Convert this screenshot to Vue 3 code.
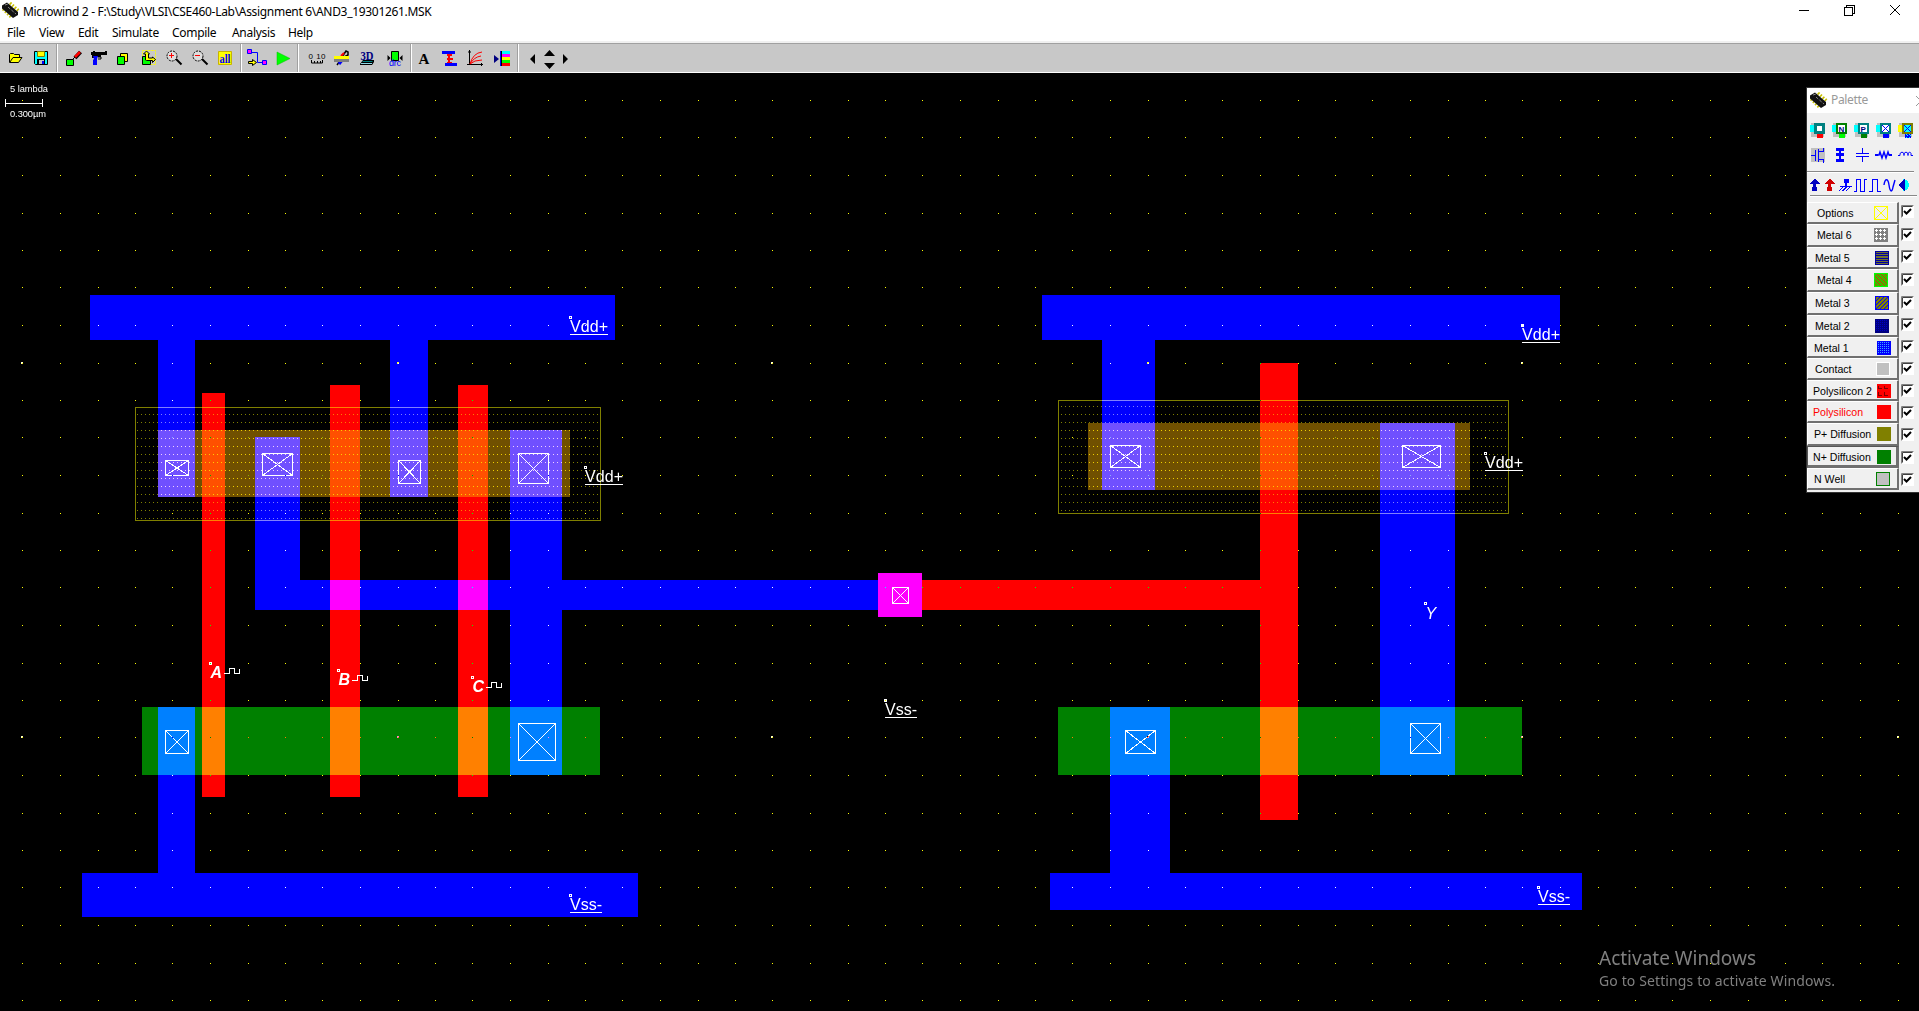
<script setup>
const menus = [
  { name: 'File', w: 32 }, { name: 'View', w: 39 }, { name: 'Edit', w: 34 },
  { name: 'Simulate', w: 60 }, { name: 'Compile', w: 60 }, { name: 'Analysis', w: 56 }, { name: 'Help', w: 40 },
]

// Metal 1 shapes
const metal = [
  'M90 295H615V340H428V497H390V340H195V497H158V340H90Z',
  'M255 437H300V580H510V430H562V580H878V573H922V617H878V610H562V775H510V610H255Z',
  'M158 707H195V873H638V917H82V873H158Z',
  'M1042 295H1560V340H1155V490H1102V340H1042Z',
  'M1380 423H1455V775H1380Z',
  'M1110 707H1170V873H1582V910H1050V873H1110Z',
]
const poly = [
  'M202 393H225V797H202Z', 'M330 385H360V797H330Z', 'M458 385H488V797H458Z',
  'M878 573H922V580H1260V363H1298V820H1260V610H922V617H878Z',
]
const pdiff = ['M158 430H570V497H158Z', 'M1088 423H1470V490H1088Z']
const ndiff = ['M142 707H600V775H142Z', 'M1058 707H1522V775H1058Z']
const wells = [
  { x: 135, y: 407, w: 466, h: 114 },
  { x: 1058, y: 400, w: 451, h: 114 },
]
const contacts = [
  [165, 460, 189, 476], [262, 453, 293, 476], [398, 460, 421, 484], [518, 453, 549, 484],
  [165, 730, 189, 754], [518, 723, 556, 761], [892, 587, 909, 604],
  [1110, 445, 1141, 468], [1402, 445, 1441, 468], [1125, 730, 1156, 754], [1410, 723, 1441, 754],
].map(([a, b, c, d]) => {
  const l = a + 0.5, t = b + 0.5, r = c - 0.5, m = d - 0.5
  return `M${l} ${t}H${r}V${m}H${l}ZL${r} ${m}M${r} ${t}L${l} ${m}`
})
const supplies = [
  { t: 'Vdd+', x: 569, y: 316, w: 38 }, { t: 'Vdd+', x: 584, y: 466, w: 38 },
  { t: 'Vdd+', x: 1521, y: 324, w: 38 }, { t: 'Vdd+', x: 1484, y: 452, w: 38 },
  { t: 'Vss-', x: 884, y: 699, w: 32 }, { t: 'Vss-', x: 569, y: 894, w: 32 },
  { t: 'Vss-', x: 1537, y: 886, w: 32 },
]
const clocks = [{ t: 'A', x: 209, y: 662 }, { t: 'B', x: 337, y: 669 }, { t: 'C', x: 471, y: 676 }]

// Lambda grid: half pixels go to the even column and to the odd row
const even = v => (v % 1 ? (Math.floor(v) % 2 ? Math.ceil(v) : Math.floor(v)) : v)
const odd = v => (v % 1 ? (Math.floor(v) % 2 ? Math.floor(v) : Math.ceil(v)) : v)
let gridPath = ''
for (let i = 0; i < 51; i++)
  for (let j = 0; j < 25; j++)
    gridPath += `M${even(22.5 + 37.5 * i)} ${odd(100 + 37.5 * j)}h1v1h-1z`
let majorPath = ''
for (const x of [21, 397, 771, 1147, 1521, 1897])
  for (const y of [362, 736]) majorPath += `M${x} ${y}h2v1h-1v1h-1z`

const vias = [
  { frame: '#008080', side: '#0ff', foot: '#f00', t: '' },
  { frame: '#008000', side: '#0ff', foot: '#0f0', t: 'N' },
  { frame: '#008080', side: '#0ff', foot: '#008000', t: 'P' },
  { frame: '#008080', side: '#0ff', foot: '#00f', t: 'x' },
  { frame: '#808000', side: '#ff0', foot: 'url(#metal3)', t: 'X' },
]
const layers = [
  { n: 'Options', h: 22, x: 10, s: 67, c: 3 }, { n: 'Metal 6', h: 23, x: 10, s: 67, c: 4 },
  { n: 'Metal 5', h: 22, x: 8, s: 68, c: 3 }, { n: 'Metal 4', h: 23, x: 10, s: 67, c: 4 },
  { n: 'Metal 3', h: 23, x: 8, s: 68, c: 4 }, { n: 'Metal 2', h: 22, x: 8, s: 68, c: 3 },
  { n: 'Metal 1', h: 21, x: 7, s: 70, c: 3 }, { n: 'Contact', h: 22, x: 8, s: 69, c: 4 },
  { n: 'Polysilicon 2', h: 21, x: 6, s: 70, c: 4 }, { n: 'Polysilicon', h: 22, x: 6, s: 70, c: 5, red: true },
  { n: 'P+ Diffusion', h: 23, x: 7, s: 70, c: 5 }, { n: 'N+ Diffusion', h: 22, x: 6, s: 70, c: 5, on: true },
  { n: 'N Well', h: 22, x: 7, s: 69, c: 5 },
]
</script>

<template>
  <div class="window">
    <header class="titlebar">
      <svg class="chip" width="18" height="18" viewBox="0 0 18 18"><g id="chipShape">
        <path d="M1 7l9 9M8 1l9 8" stroke="#c8c000" stroke-width="3" stroke-dasharray="1.6 1.6" fill="none" />
        <path d="M0 3.500L5 .5L16 10V13L11 16L0 6.500Z" fill="#111" /><path d="M3 3l3 -1M6 5l8 7" stroke="#888" stroke-width="1" stroke-dasharray="3 1.500" />
      </g></svg>
      <h1>Microwind 2 - F:\Study\VLSI\CSE460-Lab\Assignment 6\AND3_19301261.MSK</h1>
      <svg class="winbtns" width="130" height="22" viewBox="1789 0 130 22" fill="none" stroke="#000">
        <path d="M1799 10.500h10M1844.500 7.500h8v8h-8zM1846.500 7.500v-2h8v8h-2" shape-rendering="crispEdges" />
        <path d="M1890 5l10 10M1900 5l-10 10" />
      </svg>
    </header>
    <nav class="menu"><span v-for="m in menus" :key="m.name" :style="{ width: m.w + 'px' }">{{ m.name }}</span></nav>

    <div class="toolbar">
      <div class="group">
        <svg width="28" height="28" viewBox="0 44 28 28"><path d="M9.500 62.500V54.500L10.500 53.500H13.500L14.500 54.500H19.500V57.500H22L18.500 62.500Z" fill="#ff0" stroke="#000" /><path d="M10 62l3-4.500h7" fill="none" stroke="#000" /></svg>
        <svg width="28" height="28" viewBox="28 44 28 28"><path d="M34.500 51.500h13v13h-12l-1-1z" fill="#0ff" stroke="#000" /><path d="M37.500 51.500h7v5h-7z" fill="#ff0" stroke="#808000" /><path d="M37 59h8v6h-8z" fill="#000" /><path d="M39 60h5v4h-5z" fill="#c0c0c0" /><path d="M42 61h2v3h-2z" fill="#00f" /></svg>
      </div>
      <div class="group">
        <svg width="27" height="28" viewBox="58 44 27 28"><path d="M66.500 59.500h7v6h-7z" fill="#0f0" stroke="#000" /><path d="M72 60l3-3" stroke="#000" /><path d="M75 58l5.500-6" stroke="#000" stroke-width="4" /><path d="M75 57l5-5" stroke="#f00" stroke-width="2.600" /></svg>
        <svg width="26" height="28" viewBox="85 44 26 28"><path d="M91 52h2v-1h2v1h10v-1h2v4h-6v2h-4v1h-5v-3h-1z" fill="#000" /><path d="M93 56h5l-1 3v6h-4v-5l1-1z" fill="#00f" /><path d="M98 57h3v2h-3" fill="none" stroke="#000" /></svg>
        <svg width="26" height="28" viewBox="111 44 26 28"><path d="M120.500 53.500h7v8h-7z" fill="#ff0" stroke="#000" /><path d="M117.500 56.500h7v8h-7z" fill="#0f0" stroke="#000" /></svg>
        <svg width="25" height="28" viewBox="137 44 25 28"><path d="M142.500 50.500h13v14h-13z" fill="none" stroke="#ff0" stroke-dasharray="2 1" /><path d="M142.500 56.500h5v4h3v4h-8z" fill="#0f0" stroke="#000" /><path d="M145.500 60v-6h-2l3-3 3 3h-1v4h4v-1l3 2.500-3 3v-2h-6z" fill="#ff0" stroke="#000" /></svg>
        <svg width="25" height="28" viewBox="162 44 25 28"><circle cx="172" cy="56" r="5" fill="#ddd" stroke="#000" stroke-dasharray="2 1" /><path d="M169 55.500h5M171.500 53v5" stroke="#f00" /><path d="M176 59l5.500 5.500" stroke="#000" stroke-width="2" /></svg>
        <svg width="26" height="28" viewBox="187 44 26 28"><circle cx="198" cy="56" r="5" fill="#ddd" stroke="#000" stroke-dasharray="2 1" /><path d="M195 55.500h5" stroke="#f00" /><path d="M202 59l5.500 5.500" stroke="#000" stroke-width="2" /></svg>
        <svg width="27" height="28" viewBox="213 44 27 28"><path d="M218.500 51.500h13v13h-13z" fill="#ff0" stroke="#c8b400" /><text x="219.500" y="63" class="serif" font-size="13" font-weight="bold" fill="#00f" textLength="11" lengthAdjust="spacingAndGlyphs">all</text></svg>
      </div>
      <div class="group">
        <svg width="29" height="28" viewBox="242 44 29 28"><path d="M252 52.500h5.500v10h5" fill="none" stroke="#00f" /><path d="M247.500 49.500h4v4h-4zM262.500 60.500h4v4h-4z" fill="#f0f" stroke="#00f" /><path d="M248.500 61.500h4v-2l4 3-4 3v-2h-4z" fill="#ff0" stroke="#000" /></svg>
        <svg width="26" height="28" viewBox="271 44 26 28"><path d="M277 52v13l13-6.500z" fill="#0f0" stroke="#00c000" stroke-width=".5" /></svg>
      </div>
      <div class="group">
        <svg width="30" height="28" viewBox="299 44 30 28"><text x="308.500" y="59" font-size="8" textLength="17">0 10</text><path d="M311.500 60v3h11v-3M314.500 63v-2M317.500 63v-2M320.500 63v-2" fill="none" stroke="#000" /></svg>
        <svg width="26" height="28" viewBox="329 44 26 28"><path d="M341 58l3-4 2-3 2 1v3l-4 2M337 65l5-7" fill="none" stroke="#000" stroke-width="1.500" /><path d="M339 64l4-5" stroke="#00f" stroke-width="3" /><path d="M341 56l3-3" stroke="#f00" stroke-width="2" /><path d="M334 56h15v3h-15z" fill="#ff0" /><path d="M334 59h15v3h-15z" fill="#808080" /></svg>
        <svg width="28" height="28" viewBox="355 44 28 28"><text x="360.500" y="60" class="serif" font-weight="bold" font-size="13" fill="#000080" textLength="13" lengthAdjust="spacingAndGlyphs">3D</text><path d="M360 64l3-4h11v2l-2 3h-12z" fill="#000" /><path d="M363 61h10l-1 1h-10z" fill="#008080" /><path d="M361 63h11v1h-11z" fill="#90d8e8" /></svg>
        <svg width="27" height="28" viewBox="383 44 27 28"><path d="M391.500 51.500h7v9h-7z" fill="#0f0" stroke="#000" /><path d="M387.500 55v6l3-3zM402.500 55v6l-3-3z" fill="#000" /><text x="389" y="66" font-size="9" fill="#00f" textLength="12">drc</text></svg>
      </div>
      <div class="group">
        <svg width="25" height="28" viewBox="412 44 25 28"><text x="418.500" y="64" class="serif" font-weight="bold" font-size="15">A</text></svg>
        <svg width="25" height="28" viewBox="437 44 25 28"><path d="M442 51h13v3h-13zM445 63h12v3h-12z" fill="#00f" /><path d="M447 54h5v2h-2v2h3v2h-3v2h2v1h-5v-1h1v-2h-1v-2h1v-2h-1z" fill="#f00" /></svg>
        <svg width="26" height="28" viewBox="462 44 26 28"><path d="M469.500 50v15M467 64.500h16M468 52h3M481.500 63v3" stroke="#000" /><path d="M470 64q3-11 12-12M470 64q4-7 11-8M470 64q4-4 12-4" fill="none" stroke="#f00" /></svg>
        <svg width="29" height="28" viewBox="488 44 29 28"><path d="M501 51h9v15h-9z" fill="#000" /><path d="M502 51h8v3h-8z" fill="#0ff" /><path d="M502 54h8v3h-8z" fill="#f0f" /><path d="M502 57h8v3h-8z" fill="#ff0" /><path d="M502 60h8v3h-8z" fill="#0f0" /><path d="M502 63h8v3h-8z" fill="#f00" /><path d="M494 55l5 4-5 4z" fill="#000080" /><path d="M500.500 51v15" stroke="#00f" /></svg>
      </div>
      <div class="group">
        <svg width="60" height="28" viewBox="519 44 60 28"><path d="M535 54v10l-5-5zM563 54v10l5-5zM544 56h11l-5.500-6zM544 63h11l-5.500 6z" /></svg>
      </div>
    </div>

    <main class="canvas">
      <svg class="layout" width="1919" height="938" viewBox="0 73 1919 938">
        <defs>
          <pattern id="nwell" x="1" y="6" width="4" height="8" patternUnits="userSpaceOnUse"><rect width="1" height="1" fill="#808000" /></pattern>
        </defs>
        <rect y="73" width="1919" height="938" fill="#000" />
        <g fill="#808080" class="watermark">
          <text x="1599" y="965" font-size="19" textLength="157">Activate Windows</text>
          <text x="1599" y="986" font-size="14" textLength="236">Go to Settings to activate Windows.</text>
        </g>
        <path v-for="d in metal" :key="d" :d="d" class="add" fill="#00f" />
        <path v-for="d in poly" :key="d" :d="d" class="add" fill="#f00" />
        <path v-for="d in pdiff" :key="d" :d="d" class="add" fill="#705000" />
        <path v-for="d in ndiff" :key="d" :d="d" class="add" fill="#008000" />
        <g v-for="w in wells" :key="w.x" class="add">
          <rect :x="w.x + 1" :y="w.y + 1" :width="w.w - 3" :height="w.h - 2" fill="url(#nwell)" />
          <rect :x="w.x + .5" :y="w.y + .5" :width="w.w - 1" :height="w.h - 1" fill="none" stroke="#808000" />
        </g>
        <path v-for="d in contacts" :key="d" :d="d" class="px" fill="none" stroke="#fff" />
        <path :d="gridPath" class="diff" fill="#ff0" />
        <path :d="majorPath" class="diff" fill="#ffc" />

        <g v-for="s in supplies" :key="s.x + s.t + s.y" fill="#fff">
          <rect :x="s.x + .5" :y="s.y + .5" width="2" height="2" fill="none" stroke="#fff" />
          <text :x="s.x + 1" :y="s.y + 16" font-size="16" :textLength="s.w">{{ s.t }}</text>
          <rect :x="s.x + 1" :y="s.y + 18" :width="s.w" height="1" />
        </g>
        <g v-for="c in clocks" :key="c.t" fill="#fff">
          <rect :x="c.x + .5" :y="c.y + .5" width="2" height="2" fill="none" stroke="#fff" />
          <text :x="c.x + 1.5" :y="c.y + 16" font-size="16" font-weight="bold" font-style="italic">{{ c.t }}</text>
          <path :d="`M${c.x + 15} ${c.y + 11.5}h5.500v-5h5v5h5v-5`" fill="none" stroke="#fff" />
        </g>
        <rect x="1424.500" y="602.500" width="2" height="2" fill="none" stroke="#fff" />
        <text x="1425.500" y="619" font-size="16" font-style="italic" fill="#fff">Y</text>

        <g fill="#fff">
          <text x="10" y="92" font-size="9.300" textLength="38">5 lambda</text>
          <text x="10" y="117" font-size="9.300" textLength="36">0.300µm</text>
          <path d="M5.500 99v8M42.500 99v8M5 103.500h38" class="px" stroke="#fff" />
        </g>
      </svg>

      <aside class="palette">
        <div class="ptitle">
          <svg width="18" height="18" viewBox="0 0 18 18"><use href="#chipShape" /></svg>
          <span>Palette</span>
          <svg class="pclose" width="4" height="12" viewBox="0 0 4 12"><path d="M1 1l5 5-5 5" fill="none" stroke="#999" /></svg>
        </div>
        <svg class="ptools" width="112" height="89" viewBox="1807 113 112 89">
          <defs>
            <pattern id="metal3" width="3" height="3" patternUnits="userSpaceOnUse"><rect width="3" height="3" fill="#0ff" /><path d="M0 3L3 0" stroke="#00f" stroke-width="2" /></pattern>
          </defs>
          <g v-for="(v, i) in vias" :key="i" :transform="`translate(${1810 + i * 22} 123)`">
            <path d="M1 0h13v14h-13z" fill="#c0c0c0" />
            <path d="M0 2h5v7h-5z" :fill="v.side" />
            <rect x="4" y="0" width="11" height="11" :fill="v.frame" />
            <rect v-if="!v.t" x="7" y="3" width="5" height="5" fill="#fff" />
            <rect v-else x="6" y="2" width="7" height="7" :fill="v.t === 'X' ? '#0ff' : '#fff'" />
            <path v-if="v.t.toLowerCase() === 'x'" d="M6 2l7 7M13 2l-7 7" stroke="#00f" />
            <text v-else x="6.500" y="8.500" font-size="8" font-weight="bold" fill="#000080">{{ v.t }}</text>
            <rect x="7" y="11" width="6" height="3.500" :fill="v.foot" />
          </g>
          <g fill="none" stroke="#00f">
            <path d="M1811 148h14v14h-14z" fill="#c0c0c0" stroke="none" />
            <path d="M1811 155.500h4M1815.500 150v11M1818.500 149v13M1818 151.500h6M1818 159.500h6M1823.500 148v4M1823.500 159v4" />
            <path d="M1836 148h8v3h-8zM1836 153h8v3h-8zM1836 159h8v3h-8z" fill="#00f" stroke="none" /><path d="M1840 148v14" stroke-width="2" />
            <path d="M1862.500 148v5M1856 153.500h13M1856 156.500h13M1862.500 156v6" />
            <path d="M1876 155h3l1-3 2 6 2-6 2 6 2-6 1 3h3" stroke-width="1.500" shape-rendering="auto" />
            <path d="M1875 155h3M1889 155h3" stroke-width="2.500" />
            <path d="M1898 155.500h2v-2q2-3 4 0v2v-2q2-3 4 0v2v-2q2-3 3 0v2h2" shape-rendering="auto" />
            <path d="M1854 191.500h2.500v-12h4v12h4v-12h2.500" />
            <path d="M1869 191.500h3.500v-12h5v12h3.500" />
            <path d="M1884 185c1-7 4-7 5 0s3 8 4 2l2-7" stroke-width="1.400" shape-rendering="auto" />
          </g>
          <g v-for="(c, i) in ['#0000c0', '#d00000']" :key="c" :fill="c" :transform="`translate(${1810 + i * 15} 179)`">
            <path d="M4 0h1l5 5h-4v4h-3v-4h-3zM2 8h5v4h-5z" />
          </g>
          <path d="M1844 179h5v4h-2v3h-2v-3h-1zM1840 186h12v1h-12z" fill="#00f" /><path d="M1839 191l4-4M1842.500 191l4-4M1846 191l4-4" stroke="#00f" />
          <path d="M1903 179q6 1 6 6t-6 6z" fill="#0ff" /><path d="M1899 185l6-7v14z" fill="#0000c0" />
          <path d="M1807 171.500h107M1810 195.500h107" stroke="#888" /><path d="M1807 172.500h107M1810 196.500h107" stroke="#fff" />
        </svg>
        <div v-for="(l, i) in layers" :key="l.n" class="row" :style="{ height: l.h + 'px' }">
          <div class="btn" :class="{ on: l.on, red: l.red }" :style="{ paddingLeft: l.x - 1 + 'px', paddingRight: 90 - l.s - 14 + 'px' }">
            <span>{{ l.n }}</span>
            <svg width="14" height="14" viewBox="0 0 14 14" shape-rendering="crispEdges">
              <g v-if="i === 0" fill="none" stroke="#ff0"><path d="M.5 .5h13v13h-13z" /><path d="M1 1l12 12M13 1l-12 12" /></g>
              <g v-else-if="i === 1"><rect width="14" height="14" fill="#808080" /><path d="M1 2.500h12M1 6.500h12M1 10.500h12" stroke="#fff" stroke-dasharray="3 1" /><path d="M2.500 1v12M6.500 1v12M10.500 1v12" stroke="#fff" stroke-dasharray="3 1" /></g>
              <g v-else-if="i === 2"><rect width="14" height="14" fill="#707030" /><path d="M0 .5h14M0 2.500h14M0 4.500h14M0 7.500h14M0 9.500h14M0 11.500h14M0 13.500h14M.5 0v14M13.500 0v14" stroke="#0000a0" /></g>
              <g v-else-if="i === 3"><rect width="14" height="14" fill="#808000" /><path d="M1 9l4 4M1 5l8 8M1 1l12 12M5 1l8 8M9 1l4 4" stroke="#0e0" /><path d="M.5 .5h13v13h-13z" fill="none" stroke="#0f0" /></g>
              <g v-else-if="i === 4"><rect width="14" height="14" fill="#808000" /><path d="M1 5l4-4M1 9l8-8M1 13L13 1M5 13l8-8M9 13l4-4" stroke="#00f" /><path d="M.5 .5h13v13h-13z" fill="none" stroke="#00f" /></g>
              <g v-else-if="i === 5 || i === 6"><rect width="14" height="14" :fill="i === 5 ? '#000080' : '#00f'" /><path d="M1 1.500h12M1 3.500h12M1 5.500h12M1 7.500h12M1 9.500h12M1 11.500h12" :stroke="i === 5 ? '#0000c8' : '#40a0ff'" stroke-dasharray="1 1" /></g>
              <g v-else-if="i === 7"><rect width="14" height="14" fill="#fff" /><rect x="1" y="1" width="12" height="12" fill="#c0c0c0" /></g>
              <g v-else-if="i === 8"><rect width="14" height="14" fill="#f00" /><path d="M1.500 2v2h3M7.500 2v2h3M1.500 8v3h3M7.500 8v3h3" fill="none" stroke="#800000" /></g>
              <rect v-else-if="i < 12" width="14" height="14" :fill="['#f00', '#808000', '#008000'][i - 9]" />
              <rect v-else x=".5" y=".5" width="13" height="13" fill="#c0c0c0" stroke="#008000" />
            </svg>
          </div>
          <svg class="check" :style="{ marginTop: l.c + 'px' }" width="13" height="13" viewBox="0 0 13 13"><rect width="13" height="13" fill="#fff" /><path d="M.5 12.500V.5H12.500" fill="none" stroke="#808080" /><path d="M1.500 11.500V1.500H11.500" fill="none" stroke="#404040" /><path d="M3 6l2.500 2.500 4.500-4.500" fill="none" stroke="#000" stroke-width="2" /></svg>
        </div>
      </aside>
    </main>
  </div>
</template>

<style>
body { margin: 0; background: #000; overflow: hidden; }
</style>

<style scoped>
.window { display: flex; flex-direction: column; width: 1919px; height: 1011px; background: #fff; font-family: "Liberation Sans", Arial, sans-serif; }
svg { display: block; flex: none; }
.titlebar { display: flex; height: 22px; }
.chip { margin: 2px 0 0 2px; }
h1 { flex: 1; margin: 0 0 0 3px; font: 400 12px/23px "Noto Sans", sans-serif; letter-spacing: -.31px; white-space: nowrap; color: #000; }
.menu { display: flex; height: 19px; padding-left: 7px; font: 400 12px/21px "Noto Sans", sans-serif; letter-spacing: -.3px; border-bottom: 2px solid #f0f0f0; }
.menu span { white-space: nowrap; flex: none; }
.toolbar { display: flex; height: 28px; background: #c8c8c8; border-top: 1px solid #a0a0a0; border-bottom: 1px solid #fff; }
.group { display: flex; border-right: 1px solid #a0a0a0; box-shadow: 1px 0 #fff; }
.group:last-child { border: 0; box-shadow: none; }
.group + .group { margin-left: 1px; }
.serif { font-family: "Liberation Serif", serif; }
.canvas { position: relative; flex: 1; min-height: 0; background: #000; }
.layout { isolation: isolate; }
.layout rect, .layout path { shape-rendering: crispEdges; }
.add { mix-blend-mode: plus-lighter; }
.diff { mix-blend-mode: difference; }
.watermark { font-family: "Noto Sans", sans-serif; }
.palette { position: absolute; top: 15px; right: 0; width: 112px; height: 404px; background: #f0f0f0; outline: 1px solid #333; overflow: hidden; }
.ptitle { display: flex; height: 25px; background: #fff; align-items: center; padding-left: 3px; font: 400 12px/22px "Noto Sans", sans-serif; letter-spacing: -.35px; color: #999; }
.ptitle span { margin: -2px 0 0 3px; flex: 1; }
.ptools { shape-rendering: crispEdges; }
.row { display: flex; align-items: flex-start; }
.btn { display: flex; box-sizing: border-box; width: 92px; height: 100%; justify-content: space-between; align-items: flex-start; padding-top: 3px; border-top: 1px solid #fff; border-left: 1px solid #fff; border-right: 2px solid #707070; border-bottom: 2px solid #707070; font-size: 10.600px; line-height: 16px; color: #000; white-space: nowrap; }
.btn span { flex: none; width: 0; margin-top: -1px; }
.btn.red { color: #f00; }
.btn.on { border-top-color: #555; border-left-color: #555; box-shadow: inset -1px -1px #707070; }
.check { margin-left: 2px; }
</style>
